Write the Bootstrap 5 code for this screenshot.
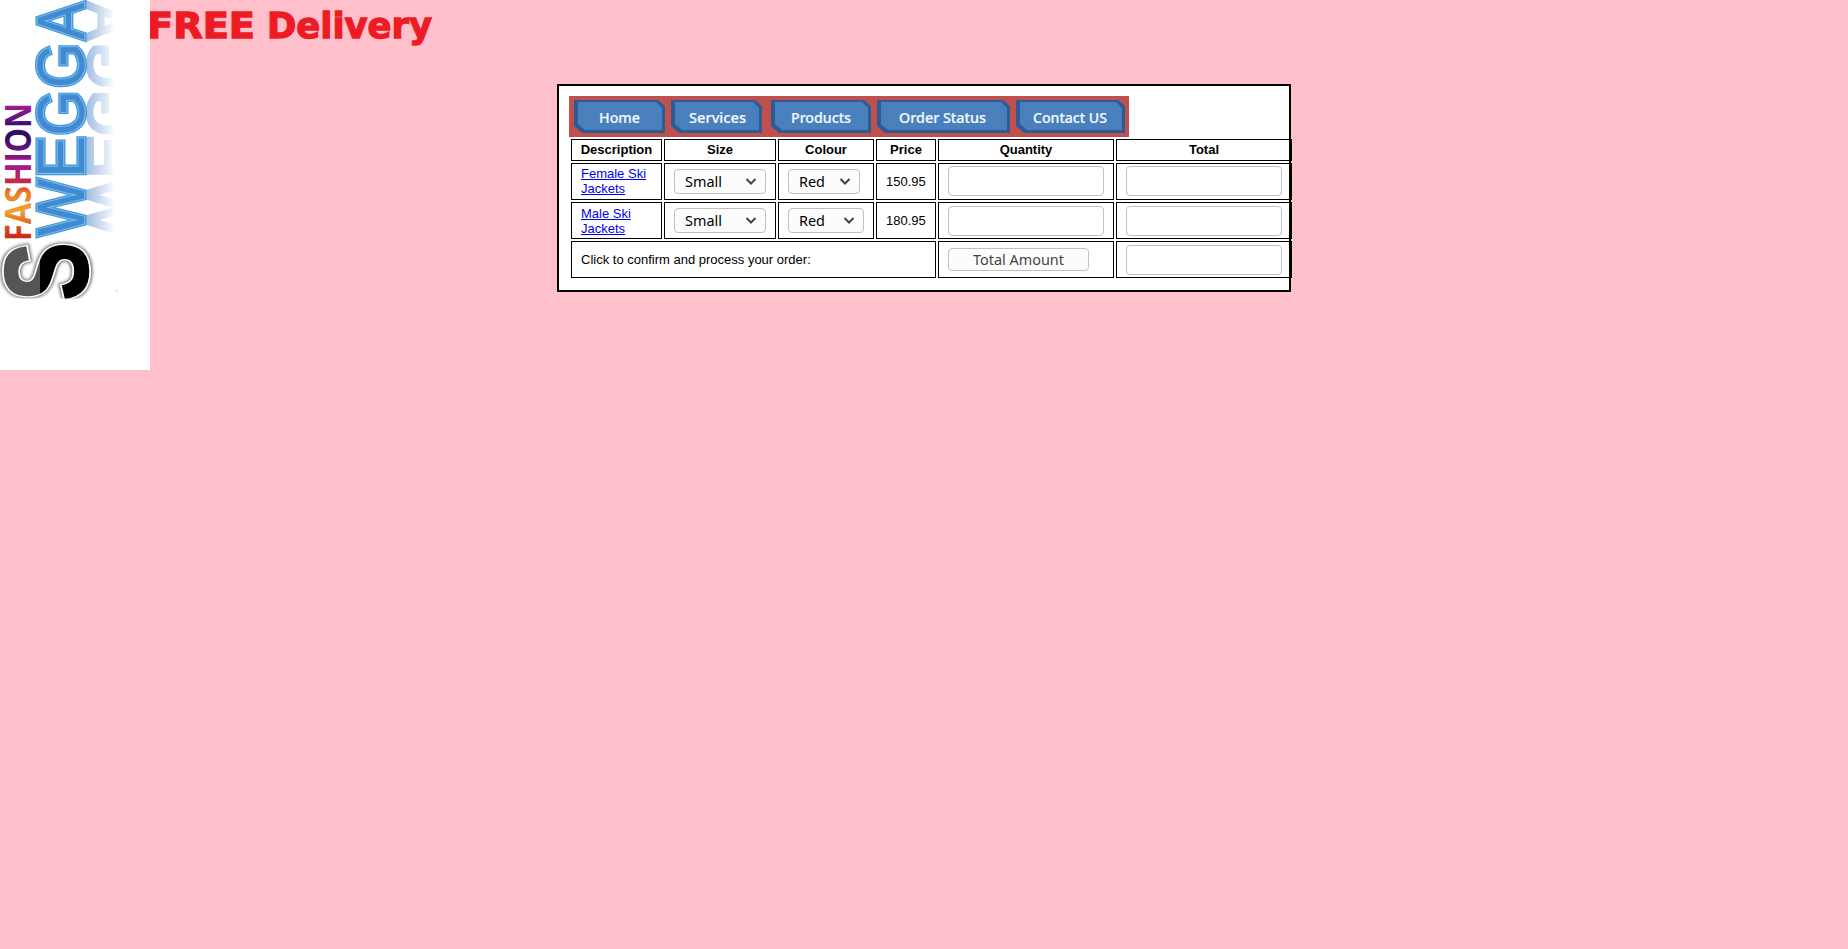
<!DOCTYPE html>
<html lang="en">
<head>
<meta charset="utf-8">
<title>Swegga Fashion - Order</title>
<link href="https://cdn.jsdelivr.net/npm/bootstrap@5.3.0/dist/css/bootstrap.min.css" rel="stylesheet">
<style>
body{background:#ffc0cb;color:#000;font:13px/15px "Liberation Sans",Arial,sans-serif}
.logo{width:150px;height:370px}
.page-main{margin-right:150px}
.promo{height:84px}
.order-box{width:734px;height:208px;border:2px solid #000;padding:10px}
.menu{width:560px;height:41px;padding:4px 4px 4px 5px;
 background:repeating-conic-gradient(#c8504c 0 25%,#b9504f 0 50%) 0 0/2px 2px}
.menu a{height:33px;background:#2d5c94;position:relative;z-index:0;text-decoration:none;
 clip-path:polygon(0 0,calc(100% - 7px) 0,100% 6px,100% 100%,8px 100%,0 calc(100% - 7px))}
.menu a::before{content:"";position:absolute;inset:2px 3px 3px 4px;z-index:-1;
 background:repeating-conic-gradient(#4b80c2 0 25%,#4680b7 0 50%) 0 0/2px 2px;
 clip-path:polygon(0 0,calc(100% - 6px) 0,100% 6px,100% 100%,7px 100%,0 calc(100% - 6px))}
.menu svg{width:100%;height:33px;fill:#f4f8ff;stroke:#f4f8ff;stroke-width:.2}
.menu text,.ui-text{font-family:"Noto Sans","Open Sans",sans-serif}
.menu text{font-size:13.5px;font-weight:500}
.order-table{width:725px;table-layout:fixed;border-collapse:separate;border-spacing:2px}
.order-table th,.order-table td{border:1px solid #000;padding:0 9px;height:37px}
.order-table th{height:22px;text-align:center;padding:0 0 1px}
.order-table .first td{padding-bottom:1px}
.order-table .ctl{vertical-align:top}
.order-table a{color:#00e}
.field{display:block;width:156px;height:30px;border:1px solid #c0c0c0;border-radius:4px;background:#fff;margin-top:3px}
.first .field{margin-top:2px}
.pick{width:92px;height:25px;border:1px solid #c0c0c0;border-radius:4px;background:#fcfcfc;margin-top:5px;padding:0 8px 0 10px}
.pick.short{width:72px}.pick.mid{width:76px}
.sum-btn{display:block;width:141px;height:23px;border:1px solid #c0c0c0;border-radius:4px;background:#fcfcfc;margin-top:6px;padding:0}
svg{display:block;flex:none}
</style>
</head>
<body>
<div class="d-flex align-items-start">
 <svg class="logo" viewBox="0 0 150 370">
  <defs>
   <linearGradient id="rainbow" gradientUnits="userSpaceOnUse" x1="0" y1="0" x2="135" y2="0">
    <stop offset="0" stop-color="#c4201c"/><stop offset=".1" stop-color="#dc4a18"/><stop offset=".22" stop-color="#efa331"/><stop offset=".36" stop-color="#ee7a20"/><stop offset=".43" stop-color="#c92a48"/><stop offset=".54" stop-color="#a61b8c"/><stop offset=".64" stop-color="#85137f"/><stop offset=".77" stop-color="#2c0b62"/><stop offset=".88" stop-color="#4b1277"/><stop offset="1" stop-color="#a01b91"/>
   </linearGradient>
   <linearGradient id="fade"><stop offset="0" stop-color="#fff" stop-opacity=".55"/><stop offset="1" stop-color="#fff" stop-opacity=".05"/></linearGradient>
   <mask id="fadeMask" maskUnits="userSpaceOnUse" x="86" y="0" width="27" height="260"><rect x="86" width="27" height="260" fill="url(#fade)"/></mask>
   <linearGradient id="ink" gradientUnits="userSpaceOnUse" x1="0" y1="-87" x2="0" y2="0"><stop offset=".455" stop-color="#555"/><stop offset=".455" stop-color="#000"/></linearGradient>
   <filter id="soft" x="-20%" y="-20%" width="140%" height="140%"><feGaussianBlur stdDeviation="1.8"/></filter>
   <clipPath id="cut"><rect width="150" height="298.5"/></clipPath>
   <g id="letters" font-family="Liberation Sans" font-size="66">
    <text x="2" textLength="57" lengthAdjust="spacingAndGlyphs">W</text>
    <text x="60" textLength="42" lengthAdjust="spacingAndGlyphs">E</text>
    <text x="102.500" textLength="45" lengthAdjust="spacingAndGlyphs">G</text>
    <text x="150" textLength="45" lengthAdjust="spacingAndGlyphs">G</text>
    <text x="198.500" textLength="37" lengthAdjust="spacingAndGlyphs">A</text>
   </g>
  </defs>
  <rect width="150" height="370" fill="#fff"/>
  <g mask="url(#fadeMask)"><use href="#letters" transform="translate(88 238) rotate(-90) scale(1 -.85)" fill="#4f86c8" stroke="#4f86c8" stroke-width="4"/></g>
  <g transform="translate(83.500 238) rotate(-90)">
   <use href="#letters" fill="#4c93d6" stroke="#4c93d6" stroke-width="5"/>
   <use href="#letters" fill="#66c6f5" stroke="#66c6f5" stroke-width="2.400"/>
   <use href="#letters" fill="#4488d0" stroke="#4488d0" stroke-width=".3"/>
  </g>
  <text transform="translate(31 241) rotate(-90)" font-family="Open Sans" font-weight="700" font-size="36" fill="url(#rainbow)" textLength="138" lengthAdjust="spacingAndGlyphs">FASHION</text>
  <g clip-path="url(#cut)" font-family="Liberation Sans" font-weight="700" font-size="116">
   <text transform="translate(87 300.500) rotate(-90)" fill="#777" stroke="#777" stroke-width="9" filter="url(#soft)" textLength="58" lengthAdjust="spacingAndGlyphs">S</text>
   <text transform="translate(87 300.500) rotate(-90)" fill="#fff" stroke="#fff" stroke-width="6" textLength="58" lengthAdjust="spacingAndGlyphs">S</text>
   <text transform="translate(87 300.500) rotate(-90)" fill="url(#ink)" stroke="url(#ink)" stroke-width="2.500" textLength="58" lengthAdjust="spacingAndGlyphs">S</text>
  </g>
  <path d="M115 290h3v2h-1v-1h-2z" fill="#ddd"/>
 </svg>
 <main class="page-main flex-grow-1">
  <svg class="promo" width="300" viewBox="0 0 300 84" font-family="DejaVu Sans" font-weight="700" font-size="35.500" fill="#ed1c24" stroke="#ed1c24" stroke-width="1.300"><text x="-3" y="37.500" textLength="108" lengthAdjust="spacingAndGlyphs">FREE</text><text x="117" y="37.500" textLength="165" lengthAdjust="spacingAndGlyphs">Delivery</text></svg>
  <section class="order-box bg-white mx-auto">
   <nav class="menu d-flex">
    <a href="#" style="width:91px"><svg><text x="25" y="23" textLength="41" lengthAdjust="spacingAndGlyphs">Home</text></svg></a>
    <a href="#" style="width:91px;margin-left:6px"><svg><text x="18" y="23" textLength="57" lengthAdjust="spacingAndGlyphs">Services</text></svg></a>
    <a href="#" style="width:100px;margin-left:9px"><svg><text x="20" y="23" textLength="60" lengthAdjust="spacingAndGlyphs">Products</text></svg></a>
    <a href="#" style="width:133px;margin-left:6px"><svg><text x="22" y="23" textLength="87" lengthAdjust="spacingAndGlyphs">Order Status</text></svg></a>
    <a href="#" style="width:109px;margin-left:6px"><svg><text x="17" y="23" textLength="74" lengthAdjust="spacingAndGlyphs">Contact US</text></svg></a>
   </nav>
   <table class="order-table">
    <colgroup><col style="width:91px"><col style="width:112px"><col style="width:96px"><col style="width:60px"><col style="width:176px"><col style="width:176px"></colgroup>
    <tr><th>Description</th><th>Size</th><th>Colour</th><th>Price</th><th>Quantity</th><th>Total</th></tr>
    <tr class="first">
     <td><a href="#">Female Ski Jackets</a></td>
     <td class="ctl"><div class="pick d-flex align-items-center justify-content-between"><svg class="ui-text" width="38" height="23"><text y="17" font-size="14" textLength="37" lengthAdjust="spacingAndGlyphs">Small</text></svg><svg width="12" height="10"><path d="M1.500 2 6 6.500 10.500 2" fill="none" stroke="#444" stroke-width="2"/></svg></div></td>
     <td class="ctl"><div class="pick short d-flex align-items-center justify-content-between"><svg class="ui-text" width="28" height="23"><text y="17" font-size="14" textLength="26" lengthAdjust="spacingAndGlyphs">Red</text></svg><svg width="12" height="10"><path d="M1.500 2 6 6.500 10.500 2" fill="none" stroke="#444" stroke-width="2"/></svg></div></td>
     <td>150.95</td>
     <td class="ctl"><input class="field" aria-label="Quantity"></td><td class="ctl"><input class="field" aria-label="Total"></td>
    </tr>
    <tr>
     <td><a href="#">Male Ski Jackets</a></td>
     <td class="ctl"><div class="pick d-flex align-items-center justify-content-between"><svg class="ui-text" width="38" height="23"><text y="17" font-size="14" textLength="37" lengthAdjust="spacingAndGlyphs">Small</text></svg><svg width="12" height="10"><path d="M1.500 2 6 6.500 10.500 2" fill="none" stroke="#444" stroke-width="2"/></svg></div></td>
     <td class="ctl"><div class="pick mid d-flex align-items-center justify-content-between"><svg class="ui-text" width="28" height="23"><text y="17" font-size="14" textLength="26" lengthAdjust="spacingAndGlyphs">Red</text></svg><svg width="12" height="10"><path d="M1.500 2 6 6.500 10.500 2" fill="none" stroke="#444" stroke-width="2"/></svg></div></td>
     <td>180.95</td>
     <td class="ctl"><input class="field" aria-label="Quantity"></td><td class="ctl"><input class="field" aria-label="Total"></td>
    </tr>
    <tr>
     <td colspan="4">Click to confirm and process your order:</td>
     <td class="ctl"><button class="sum-btn"><svg class="ui-text mx-auto" width="91" height="21"><text y="16" font-size="14" fill="#444" textLength="91" lengthAdjust="spacingAndGlyphs">Total Amount</text></svg></button></td>
     <td class="ctl"><input class="field" aria-label="Total amount"></td>
    </tr>
   </table>
  </section>
 </main>
</div>
<script src="https://cdn.jsdelivr.net/npm/bootstrap@5.3.0/dist/js/bootstrap.bundle.min.js"></script>
</body>
</html>
